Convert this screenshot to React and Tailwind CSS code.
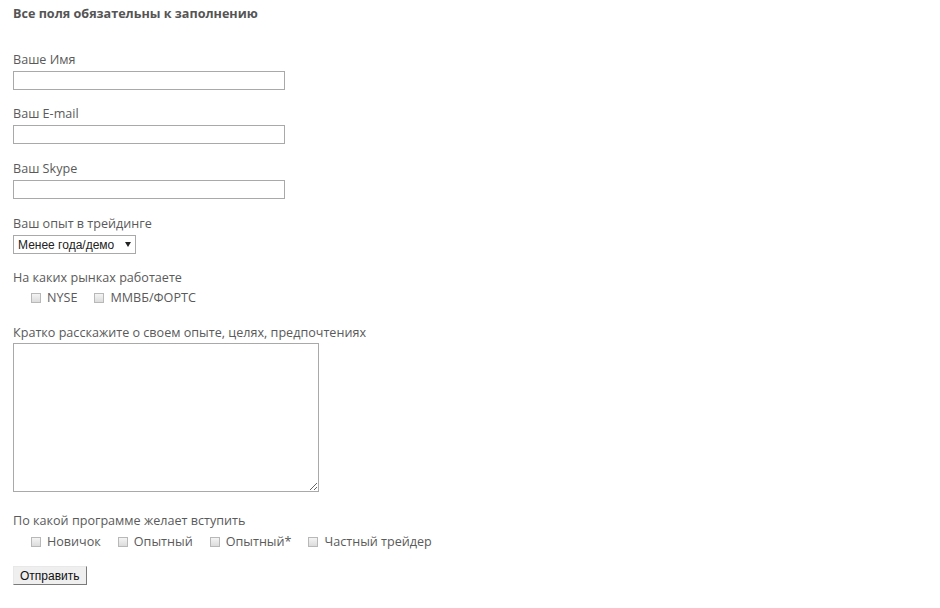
const Box = () => (
  <span className="inline-block w-[10px] h-[10px] border border-[#b8b8b8] bg-gradient-to-b from-[#f4f4f4] to-[#dcdcdc] mr-[6px] shrink-0" />
);

const Check = ({ label, first }) => (
  <label className={`flex items-center ${first ? '' : 'ml-[17px]'}`}>
    <Box />
    <span>{label}</span>
  </label>
);

const Field = ({ label, className = '', children }) => (
  <div className={className}>
    <div className="pt-[1px] leading-[19px]">{label}</div>
    {children}
  </div>
);

const inputCls = 'block mt-[2px] w-[272px] h-[19px] border border-[#a9a9a9] bg-white';

export default function App() {
  return (
    <div
      className="min-h-[608px] bg-white pl-[13px] pt-[5px] text-[12.6px] text-[#5a5a5a]"
      style={{ fontFamily: '"Open Sans", "Noto Sans", sans-serif' }}
    >
      <div className="font-bold leading-[18px] text-[#555]">Все поля обязательны к заполнению</div>

      <Field label="Ваше Имя" className="mt-[26px]">
        <input type="text" className={inputCls} />
      </Field>

      <Field label="Ваш E-mail" className="mt-[13px]">
        <input type="text" className={inputCls} />
      </Field>

      <Field label="Ваш Skype" className="mt-[14px]">
        <input type="text" className={inputCls} />
      </Field>

      <Field label="Ваш опыт в трейдинге" className="mt-[14px]">
        <div
          className="mt-[2px] flex items-center w-[123px] h-[19px] border border-[#a9a9a9] bg-white pl-[4px] text-[12px] text-[#222]"
          style={{ fontFamily: '"Liberation Sans", Arial, sans-serif' }}
        >
          <span>Менее года/демо</span>
          <svg width="6" height="5" viewBox="0 0 6 5" className="ml-[11px]">
            <path d="M0 0 L6 0 L3 5 Z" fill="#222" />
          </svg>
        </div>
      </Field>

      <Field label="На каких рынках работаете" className="mt-[13px]">
        <div className="flex items-center h-[20px] mt-[1px] pl-[18px]">
          <Check label="NYSE" first />
          <Check label="ММВБ/ФОРТС" />
        </div>
      </Field>

      <Field label="Кратко расскажите о своем опыте, целях, предпочтениях" className="mt-[14px]">
        <textarea className="block mt-[1px] w-[306px] h-[149px] border border-[#a9a9a9] bg-white" />
      </Field>

      <Field label="По какой программе желает вступить" className="mt-[18px]">
        <div className="flex items-center h-[20px] mt-[2px] pl-[18px]">
          <Check label="Новичок" first />
          <Check label="Опытный" />
          <Check label="Опытный*" />
          <Check label="Частный трейдер" />
        </div>
      </Field>

      <button
        type="button"
        className="block mt-[14px] h-[19px] px-[6px] bg-[#efefef] border border-t-[#e8e8e8] border-l-[#e8e8e8] border-r-[#7a7a7a] border-b-[#7a7a7a] text-[12px] leading-[16px] text-[#111]"
        style={{ fontFamily: '"Liberation Sans", Arial, sans-serif' }}
      >
        Отправить
      </button>
    </div>
  );
}
